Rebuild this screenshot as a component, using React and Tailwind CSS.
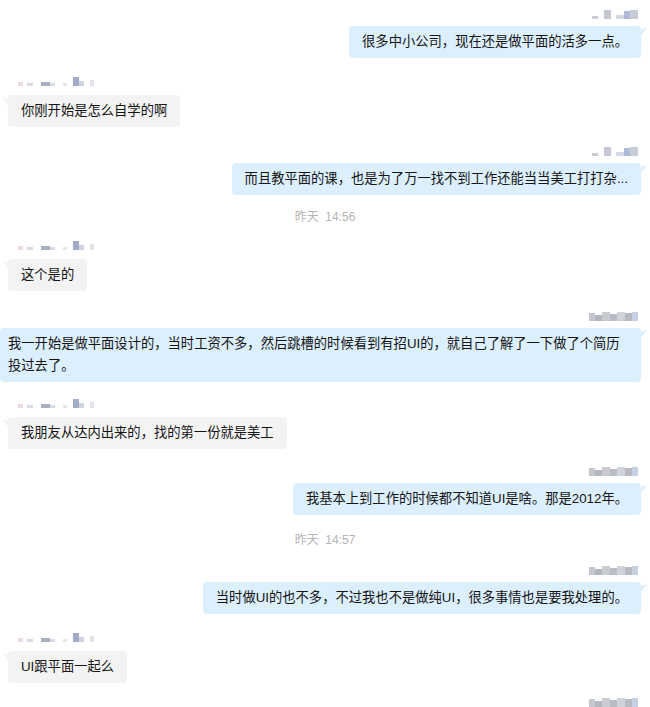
import React from "react";

const FONT = {
  fontFamily: '"Liberation Sans", "Noto Sans CJK SC", sans-serif',
};

// pixelated name blocks, [width, height, color]
const blurs = {
  a: [
    [6, 3, "#c9cdd6"],
    [6, 0, "transparent"],
    [7, 9, "#c3c8d2"],
    [5, 0, "transparent"],
    [8, 4, "#d3d9e6"],
    [6, 8, "#aebbd6"],
    [8, 9, "#c8ccd6"],
  ],
  b: [
    [6, 8, "#c4c7cd"],
    [7, 6, "#b3b7bf"],
    [8, 9, "#c9cbd0"],
    [7, 7, "#b8bcc4"],
    [8, 9, "#cfd2d8"],
    [7, 8, "#b7bac2"],
    [6, 9, "#c5d0e2"],
  ],
  l: [
    [5, 4, "#ecd9e0"],
    [4, 0, "transparent"],
    [6, 3, "#d8dce6"],
    [8, 0, "transparent"],
    [9, 4, "#a9afc4"],
    [5, 3, "#d6dae4"],
    [8, 0, "transparent"],
    [4, 3, "#e3e6ee"],
    [6, 0, "transparent"],
    [6, 9, "#a2acc8"],
    [5, 5, "#cfd4e2"],
    [6, 0, "transparent"],
    [4, 6, "#e2e4ea"],
  ],
};

const Name = ({ kind }) => (
  <div className="flex items-end h-[10px]">
    {blurs[kind].map(([w, h, c], i) => (
      <div key={i} style={{ width: w, height: h, background: c }} />
    ))}
  </div>
);

const Bubble = ({ side, children, full }) => {
  const right = side === "right";
  return (
    <div
      className={`relative rounded-[4px] text-[13.3px] leading-[22px] text-[#141414] py-[5px] ${
        right ? "bg-[#dcefFD] px-[13px]" : "bg-[#f3f3f3] px-[13px]"
      } ${full ? "w-full !pl-[8px]" : ""}`}
    >
      {right ? (
        <svg
          className="absolute -right-[6px] top-[2px]"
          width="7"
          height="9"
          viewBox="0 0 7 9"
        >
          <polygon points="0,2 7,0 0,9" fill="#dcefFD" />
        </svg>
      ) : (
        <svg
          className="absolute -left-[6px] top-[2px]"
          width="7"
          height="9"
          viewBox="0 0 7 9"
        >
          <polygon points="7,2 0,0 7,9" fill="#f3f3f3" />
        </svg>
      )}
      {children}
    </div>
  );
};

const Message = ({ side, name, text, full, className = "" }) => {
  const right = side === "right";
  return (
    <div
      className={`flex flex-col ${
        right ? "items-end pr-[9px]" : "items-start pl-[8px]"
      } ${className}`}
    >
      <div
        className={`flex ${
          right ? "justify-end pr-[3px] mb-[7px]" : "pl-[10px] mb-[9px]"
        } w-full`}
      >
        <Name kind={name} />
      </div>
      {text && (
        <Bubble side={side} full={full}>
          {text}
        </Bubble>
      )}
    </div>
  );
};

const Time = ({ children, className = "" }) => (
  <div
    className={`text-center text-[12px] leading-[16px] text-[#b4b4b4] ${className}`}
  >
    {children}
  </div>
);

export default function App() {
  return (
    <div
      className="w-[650px] h-[707px] overflow-hidden bg-white pt-[9px]"
      style={FONT}
    >
      <Message
        side="right"
        name="a"
        text="很多中小公司，现在还是做平面的活多一点。"
      />
      <Message
        side="left"
        name="l"
        className="mt-[18px]"
        text="你刚开始是怎么自学的啊"
      />
      <Message
        side="right"
        name="a"
        className="mt-[19px]"
        text="而且教平面的课，也是为了万一找不到工作还能当当美工打打杂..."
      />
      <Time className="mt-[14px]">昨天&nbsp;&nbsp;14:56</Time>
      <Message
        side="left"
        name="l"
        className="mt-[15px]"
        text="这个是的"
      />
      <Message
        side="right"
        name="b"
        full
        className="mt-[20px]"
        text={
          <>
            我一开始是做平面设计的，当时工资不多，然后跳槽的时候看到有招UI的，就自己了解了一下做了个简历
            <br />
            投过去了。
          </>
        }
      />
      <Message
        side="left"
        name="l"
        className="mt-[16px]"
        text="我朋友从达内出来的，找的第一份就是美工"
      />
      <Message
        side="right"
        name="b"
        className="mt-[17px]"
        text="我基本上到工作的时候都不知道UI是啥。那是2012年。"
      />
      <Time className="mt-[17px]">昨天&nbsp;&nbsp;14:57</Time>
      <Message
        side="right"
        name="b"
        className="mt-[17px]"
        text="当时做UI的也不多，不过我也不是做纯UI，很多事情也是要我处理的。"
      />
      <Message
        side="left"
        name="l"
        className="mt-[18px]"
        text="UI跟平面一起么"
      />
      <Message side="right" name="b" className="mt-[14px]" />
    </div>
  );
}
